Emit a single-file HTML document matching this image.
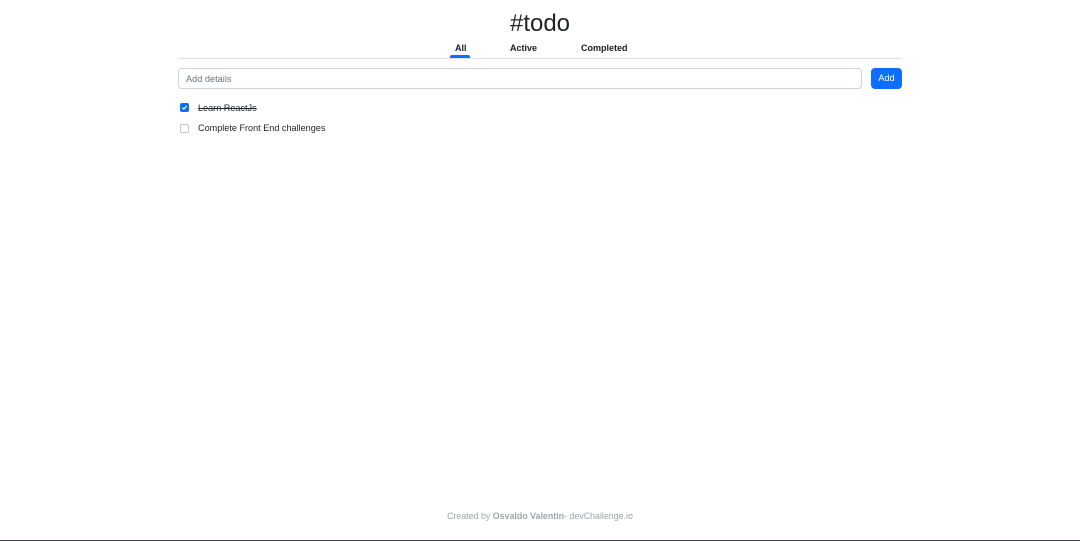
<!DOCTYPE html>
<html><head><meta charset="utf-8"><style>
*{box-sizing:border-box;margin:0;padding:0}
body{width:1080px;height:541px;background:#fff;font-family:"Liberation Sans",sans-serif;color:#212529;position:relative;overflow:hidden}
h1{position:absolute;left:0;width:1080px;top:9px;text-align:center;font-size:24px;font-weight:500;line-height:30px}
.tab{position:absolute;top:42px;font-size:9px;line-height:12px;font-weight:600;color:#1a1d20}
.line{position:absolute;left:178px;width:724px;top:58px;height:1px;background:#dee2e6}
.ul{position:absolute;left:450px;top:55px;width:20px;height:3px;background:#0d6efd;border-radius:2px 2px 0 0}
.inp{position:absolute;left:178px;top:68px;width:684px;height:21px;border:1px solid #ced4da;border-radius:4px;font-size:9.2px;color:#6c757d;padding:4px 7px;line-height:12px}
.btn{position:absolute;left:871px;top:68px;width:31px;height:21px;background:#0d6efd;border-radius:4px;color:#fff;font-size:9.2px;text-align:center;line-height:21px}
.cb{position:absolute;left:180px;width:9px;height:9px;border:1px solid #bfc4c9;border-radius:2px}
.cb.on{background:#0d6efd;border-color:#0d6efd}
.t{position:absolute;left:198px;font-size:9.1px;line-height:12px}
.foot{position:absolute;left:0;width:1080px;top:511px;text-align:center;font-size:8.85px;color:#a0a4a8}
.bar{position:absolute;left:0;bottom:0;width:1080px;height:1px;background:#3c444c}
</style></head><body>
<h1>#todo</h1>
<div class="tab" style="left:455px">All</div>
<div class="tab" style="left:510px">Active</div>
<div class="tab" style="left:581px">Completed</div>
<div class="line"></div><div class="ul"></div>
<div class="inp">Add details</div>
<div class="btn">Add</div>
<div class="cb on" style="top:103px"><svg width="7" height="7" viewBox="0 0 8 8" style="position:absolute;left:0;top:0"><path d="M1.5 4.2 L3.2 5.8 L6.5 2.3" stroke="#fff" stroke-width="1.3" fill="none"/></svg></div>
<div class="t" style="top:102px;text-decoration:line-through">Learn ReactJs</div>
<div class="cb" style="top:124px"></div>
<div class="t" style="top:122px">Complete Front End challenges</div>
<div class="foot">Created by <b>Osvaldo Valentin</b>- devChallenge.io</div>
<div class="bar"></div>
</body></html>
